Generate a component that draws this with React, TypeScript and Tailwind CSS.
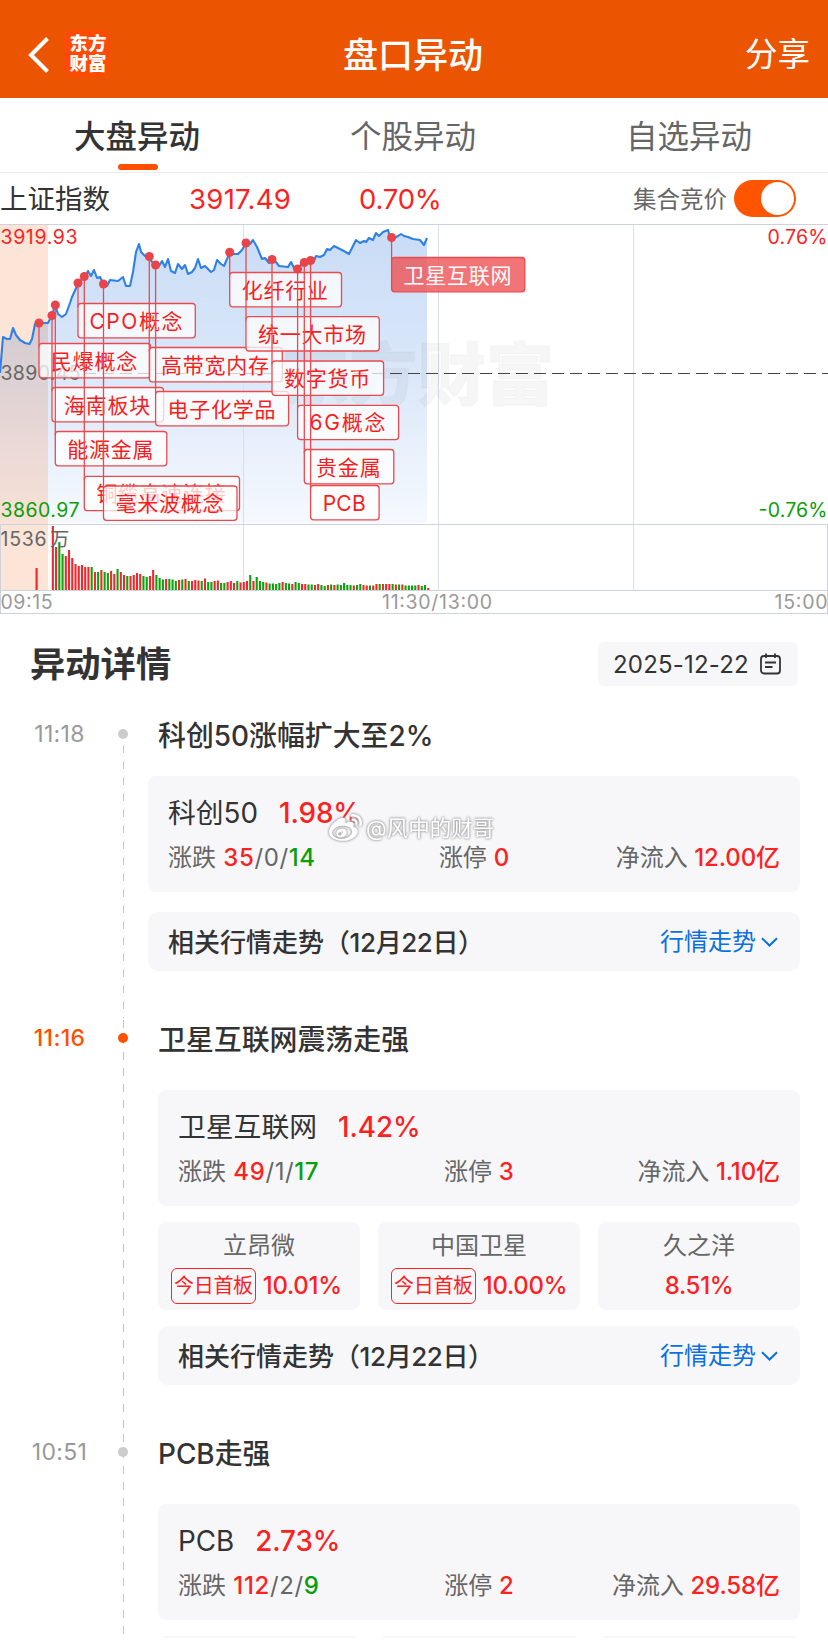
import { FaWeibo } from "react-icons/fa";

type Stock = { name: string; pct: string; board?: boolean };
type Event = {
  time: string;
  title: string;
  active?: boolean;
  name: string;
  pct: string;
  up: string;
  flat: string;
  down: string;
  limit: string;
  inflow: string;
  stocks: Stock[];
  last?: boolean;
};

const EVENTS: Event[] = [
  {
    time: "11:18", title: "科创50涨幅扩大至2%", name: "科创50", pct: "1.98%",
    up: "35", flat: "0", down: "14", limit: "0", inflow: "12.00亿", stocks: [],
  },
  {
    time: "11:16", title: "卫星互联网震荡走强", active: true, name: "卫星互联网", pct: "1.42%",
    up: "49", flat: "1", down: "17", limit: "3", inflow: "1.10亿",
    stocks: [
      { name: "立昂微", pct: "10.01%", board: true },
      { name: "中国卫星", pct: "10.00%", board: true },
      { name: "久之洋", pct: "8.51%" },
    ],
  },
  {
    time: "10:51", title: "PCB走强", name: "PCB", pct: "2.73%",
    up: "112", flat: "2", down: "9", limit: "2", inflow: "29.58亿",
    stocks: [], last: true,
  },
];

const PRICE =
  "0,373 3,337 7,339 10,339 13,328 16,335 20,340 25,343 29.5,344 32,339 35,324 39,323 48,323 52,315 55,305 58,314 62,317 66,314 70,303 72,297 78,284 82,279 85,277 88,271 91,276 94,270 97,278 100,277 104,285 107,286 110,280 118,281 123,277 126,286 130,286 133,272 136,252 139,244 141,252 145,256 149,256 152,262 156,265 159,266 162,261 165,267 168,259 171,271 175,273 178,264 182,269 185,265 188,274 192,272 195,268 198,259 201,268 205,266 211,272 214,270 217,260 221,264 224,266 230,252 234,254 238,254 242,250 246,243 250,244 253,240 257,247 262,259 265,258 269,263 272,259 276,262 279,266 288,267 291,262 295,270 298,269 301,265 304,262 310,260 313,263 316,256 320,257 324,255 327,249 330,250 334,246 338,248 342,250 349,254 353,246 356,240 360,243 364,241 366,242 369,238 373,240 376,233 379,236 383,232 388,230 390,237 394,238 398,236 401,234 404,236 408,237 413,239 420,240 424,245 427,238";

const VOLUME =
  "r64 r43 g48 g36 r34 r40 r32 r26 r24 r25 r23 r23 g23 r18 g18 r20 g18 g17 r19 r16 g21 r18 r15 g14 r14 r15 r17 r16 g14 g13 r14 r20 g15 g12 g10.5 r11 g11 g10.5 g9 r10 g10.5 r11 g9 r9 r10 r9.5 g9 r11.5 g8 g8 r9 r9.5 g7 g7 r8 r9 r7 g9 r7.5 r8 r9 g15 r9 g13 g9 g8 r7.5 g6.5 g6.5 g6 g7 r8 g7 g6.5 r6 g8 g7 r6 r6 g5.5 g5.5 r5 r6 g5 g4 r5 g5.5 r5 g5.5 g5 g7 g5 g5 r4.5 g5 g6 r5 r4.5 g4.5 r4.5 r6 g6 r6 r6 r6 g6 r5.5 g5.5 r5.5 g4.5 g4.5 g4.5 g4.5 r5 g4 g5 r2".split(" ");

type Tag = { t: string; x: number; y: number; w: number; dy: number; hot?: boolean };

const TAGS: Tag[] = [
  { t: "民爆概念", x: 39, y: 343.5, w: 111.5, dy: 323 },
  { t: "海南板块", x: 52, y: 387.5, w: 111.5, dy: 315.5 },
  { t: "能源金属", x: 55.3, y: 431.5, w: 111.5, dy: 305 },
  { t: "CPO概念", x: 78, y: 303.5, w: 117.3, dy: 283 },
  { t: "铜缆高速连接", x: 84.3, y: 476.3, w: 155.2, dy: 276.5 },
  { t: "毫米波概念", x: 103.5, y: 486, w: 133.5, dy: 284 },
  { t: "高带宽内存", x: 149.3, y: 347.5, w: 133, dy: 256.5 },
  { t: "电子化学品", x: 155.6, y: 391.5, w: 133, dy: 265 },
  { t: "化纤行业", x: 229.7, y: 272.5, w: 111.8, dy: 252.3 },
  { t: "统一大市场", x: 246, y: 316.7, w: 133.3, dy: 243 },
  { t: "数字货币", x: 272, y: 361, w: 111.6, dy: 259.5 },
  { t: "6G概念", x: 297.6, y: 405.3, w: 101, dy: 269 },
  { t: "贵金属", x: 304.3, y: 449.5, w: 89.5, dy: 262.5 },
  { t: "PCB", x: 310.6, y: 485.5, w: 68.5, dy: 260.5 },
  { t: "卫星互联网", x: 391.6, y: 257.5, w: 133.2, dy: 237.5, hot: true },
];

const TEXT_W: Record<string, number> = { CPO概念: 93, "6G概念": 76, PCB: 43 };

function Axis({ x, y, w, fill, end, children }: { x: number; y: number; w: number; fill: string; end?: boolean; children: string }) {
  return (
    <text x={x} y={y} fontSize="19.5" fill={fill} textLength={w} textAnchor={end ? "end" : "start"}>
      {children}
    </text>
  );
}

function Chart() {
  return (
    <svg className="block h-[390px] w-full" viewBox="0 224 828 390">
      <defs>
        <linearGradient id="area" x1="0" y1="230" x2="0" y2="523" gradientUnits="userSpaceOnUse">
          <stop offset="0" stopColor="#c9dcf6" />
          <stop offset="0.5" stopColor="#dbe8f9" />
          <stop offset="1" stopColor="#f5f9fe" />
        </linearGradient>
        <linearGradient id="early" x1="0" y1="320" x2="0" y2="523" gradientUnits="userSpaceOnUse">
          <stop offset="0" stopColor="#d2cbd2" />
          <stop offset="1" stopColor="#f9e1d7" />
        </linearGradient>
      </defs>
      <rect x="0" y="225" width="48" height="365" fill="#fce4d7" />
      <polygon points={`0,523 ${PRICE} 427,523`} fill="url(#area)" />
      <polygon points="0,523 0,373 3,337 7,339 10,339 13,328 16,335 20,340 25,343 29.5,344 32,339 35,324 39,323 48,323 48,523" fill="url(#early)" />
      <path d="M243.5 225V590M438.5 225V590M633.5 225V590" stroke="#d9dee8" />
      <text x="281" y="400" fontSize="68" fontWeight="900" fill="#000" fillOpacity="0.035" stroke="#000" strokeOpacity="0.015" strokeWidth="2" textLength="273">东方财富</text>
      <path d="M84 373.5H828" stroke="#444" strokeWidth="1.2" strokeDasharray="12 6" />
      <path d="M0 224.5H828M0 524.5H828M0 590.5H828M0 613.5H828M.5 524V614M827.5 524V614" stroke="#cdd2dc" />
      <polyline points={PRICE} fill="none" stroke="#2f80e4" strokeWidth="2.1" strokeLinejoin="round" />
      <rect x="35.5" y="568" width="2.2" height="22" fill="#f0282c" />
      {VOLUME.map((v, i) => {
        const h = Number(v.slice(1));
        return <rect key={i} x={51.8 + i * 3.236} y={590 - h} width="2.1" height={h} fill={v[0] === "r" ? "#f0282c" : "#0aa30a"} />;
      })}
      <Axis x={0.5} y={244.3} w={77} fill="#fc2222">3919.93</Axis>
      <Axis x={827.5} y={244.3} w={60} fill="#fc2222" end>0.76%</Axis>
      <Axis x={0.5} y={379.8} w={80} fill="#666">3890.45</Axis>
      <Axis x={0.5} y={517} w={79} fill="#0a9e0a">3860.97</Axis>
      <Axis x={827.5} y={517} w={69} fill="#0a9e0a" end>-0.76%</Axis>
      <Axis x={0.5} y={546.3} w={46} fill="#666">1536</Axis>
      <Axis x={50} y={546.3} w={19} fill="#666">万</Axis>
      <Axis x={0.5} y={609} w={52} fill="#999">09:15</Axis>
      <Axis x={382} y={609} w={110} fill="#999">11:30/13:00</Axis>
      <Axis x={827.5} y={609} w={53} fill="#999" end>15:00</Axis>
      {TAGS.map((g) => (
        <g key={g.t}>
          <path d={`M${g.x} ${g.dy}V${g.y + 4}`} stroke="#ea4a4e" strokeWidth="1.3" />
          <rect x={g.x} y={g.y} width={g.w} height="34.3" rx="3" fill={g.hot ? "#ee5558" : "#fff"} fillOpacity={g.hot ? 0.82 : 0.75} stroke="#ea4a4e" strokeWidth="1.3" />
          <text x={g.x + g.w / 2 - 0.7} y={g.y + 25} fontSize="21" textAnchor="middle" fill={g.hot ? "#fff" : "#f91d20"} textLength={TEXT_W[g.t] ?? g.t.length * 21.6}>
            {g.t}
          </text>
          <circle cx={g.x} cy={g.dy} r="4.5" fill="#e9444a" />
        </g>
      ))}
    </svg>
  );
}

function Related({ first }: { first: boolean }) {
  return (
    <div className={`${first ? "mt-5" : "mt-4"} flex h-[59px] items-center justify-between rounded-[10px] bg-[#f7f7fa] pr-[22px] pl-5`}>
      <span className="pt-0.5 text-[26px] font-medium text-[#333]">
        相关行情走势<span className="tracking-[-0.4px]">（12月22日）</span>
      </span>
      <span className="flex items-center gap-[5px] text-[24px] text-[#0b70e0]">
        行情走势
        <svg className="h-[10px] w-[17px]" viewBox="0 0 17 10" fill="none" stroke="currentColor" strokeWidth="2">
          <path d="M1 1.2 8.5 8.5 16 1.2" />
        </svg>
      </span>
    </div>
  );
}

function Section({ e, i }: { e: Event; i: number }) {
  const first = i === 0;
  return (
    <section className={`grid grid-cols-[118px_11px_1fr] pr-7 ${first ? "h-[307px]" : "h-[414px]"}`}>
      <div className={`pl-px text-center text-[23px] leading-7 tracking-[0.3px] ${first ? "pt-[7px]" : "pt-1"} ${e.active ? "font-medium text-[#ff5000]" : "text-[#999]"}`}>
        {e.time}
      </div>
      <div className={`relative flex justify-center ${first ? "pt-8 pb-0.5" : ""}`}>
        <div className="w-px bg-[repeating-linear-gradient(to_bottom,#c4c4c4_0px,#c4c4c4_8px,transparent_8px,transparent_16px)]" />
        <i className={`absolute left-0 size-[10px] rounded-full ${first ? "top-4" : "top-[13px]"} ${e.active ? "bg-[#ff5000]" : "bg-[#ccc]"}`} />
      </div>
      <div className={first ? "pl-[19px]" : "pl-[29px]"}>
        <h3 className={`text-[27.9px] leading-10 font-medium text-[#333] ${first ? "mb-[20px] pt-[3px] pl-2.5" : "mb-[30px]"}`}>{e.title}</h3>
        <div className="h-[116px] rounded-lg bg-[#f7f7fa] px-5 pt-4">
          <div className="flex gap-[21px] pt-px text-[27.8px] leading-10 text-[#333]">
            <span>{e.name}</span>
            <span className="font-medium tracking-[-0.1px] text-[#fc2222]">{e.pct}</span>
          </div>
          <div className="grid grid-cols-[1fr_auto_1fr] pt-[5px] text-[24px] leading-10 text-[#666]">
            <span className="tracking-[0.6px]">
              <span className="tracking-normal">涨跌</span> <b className="font-medium text-[#fc2222]">{e.up}</b>/{e.flat}/<b className="font-medium text-[#0a9e0a]">{e.down}</b>
            </span>
            <span>涨停 <b className="font-medium text-[#fc2222]">{e.limit}</b></span>
            <span className="text-right tracking-[-0.1px]">净流入 <b className="font-medium text-[#fc2222]">{e.inflow}</b></span>
          </div>
        </div>
        {e.stocks.length > 0 && (
          <div className="mt-4 grid grid-cols-3 gap-[18px]">
            {e.stocks.map((s) => (
              <div key={s.name} className="flex h-[88px] flex-col rounded-lg bg-[#f7f7fa] pt-1.5 text-center text-[24px] text-[#666]">
                <span className="leading-9">{s.name}</span>
                <span className={`flex items-center gap-[7px] pt-0.5 leading-10 font-medium tracking-[-0.3px] text-[#fc2222] ${s.board ? "pl-[13px]" : "justify-center"}`}>
                  {s.board && (
                    <em className="h-9 rounded-md border border-[#fc2222] px-0.5 text-[20px] leading-[34px] font-normal tracking-[-0.3px] not-italic">今日首板</em>
                  )}
                  {s.pct}
                </span>
              </div>
            ))}
          </div>
        )}
        {e.last ? (
          <div className="mt-4 grid grid-cols-3 gap-[18px]">
            <div className="h-[88px] rounded-lg bg-[#f7f7fa]" />
            <div className="h-[88px] rounded-lg bg-[#f7f7fa]" />
            <div className="h-[88px] rounded-lg bg-[#f7f7fa]" />
          </div>
        ) : (
          <Related first={first} />
        )}
      </div>
    </section>
  );
}

export default function App() {
  return (
    <div className="relative h-[1652px] w-[828px] overflow-hidden bg-white font-['Inter','Noto_Sans_CJK_SC',sans-serif] whitespace-nowrap text-[#333]">
      <header className="grid h-[98px] grid-cols-3 items-center bg-[#eb5502] px-[18px] pt-3 text-white">
        <div className="flex items-center gap-[15px] pl-2.5">
          <svg className="h-[36px] w-[21px]" viewBox="0 0 21 36" fill="none" stroke="#fff" strokeWidth="4">
            <path d="M19.5 1.5 3 18 19.5 34.5" />
          </svg>
          <div className="-mt-1 flex h-[47px] w-[46px] flex-col items-center justify-center rounded-[9px] bg-[#ff4a03] pl-0.5 text-[18.5px] leading-5 font-black">
            <span>东方</span>
            <span>财富</span>
          </div>
        </div>
        <h1 className="pr-0.5 text-center text-[35px] font-medium">盘口异动</h1>
        <span className="text-right text-[32.5px]">分享</span>
      </header>

      <nav className="grid h-[75px] grid-cols-3 border-b border-[#ececec] text-center text-[31.5px] leading-[78px] text-[#666]">
        <div className="flex flex-col items-center">
          <span className="h-[66px] pr-0.5 font-medium text-[#333]">大盘异动</span>
          <i className="h-1.5 w-10 rounded-full bg-[#ff5000]" />
        </div>
        <span className="pr-0.5">个股异动</span>
        <span className="pr-0.5">自选异动</span>
      </nav>

      <div className="flex h-[51px] items-center text-[27.5px] text-[#fc2222]">
        <span className="w-[189px] pt-0.5 text-[#333]">上证指数</span>
        <span className="w-[170px] pt-0.5 tracking-[0.3px]">3917.49</span>
        <span className="pt-0.5 tracking-[-0.2px]">0.70%</span>
        <span className="ml-auto pt-0.5 text-[23.5px] text-[#666]">集合竞价</span>
        <span className="mr-8 ml-[7px] flex h-[37px] w-[62px] justify-end rounded-full bg-[#ff5500] p-0.5">
          <i className="size-[33px] rounded-full bg-white" />
        </span>
      </div>

      <Chart />

      <div className="flex h-[99px] items-center justify-between pr-[30px] pl-[30px]">
        <h2 className="pt-[3px] text-[35.3px] font-bold">异动详情</h2>
        <span className="flex h-11 w-[200px] items-center justify-between rounded-md bg-[#f7f7fa] pr-[17px] pl-[15px] text-[24px]">
          <span className="pt-0.5 tracking-[0.2px]">2025-12-22</span>
          <svg className="h-[22px] w-[21px]" viewBox="0 0 21 22" fill="none" stroke="#333" strokeWidth="1.8">
            <rect x="1" y="3" width="19" height="17.5" rx="3" />
            <path d="M6 .5V5M15 .5V5M5 9.5H16M5 14H12.5" />
          </svg>
        </span>
      </div>

      <main className="h-[925px] overflow-hidden">
        {EVENTS.map((e, i) => (
          <Section key={e.time} e={e} i={i} />
        ))}
      </main>

      <div className="absolute top-[812px] left-[329px] flex items-center gap-[4px] text-[21.5px] text-white [filter:drop-shadow(0_0_1px_#999)_drop-shadow(0_0_1px_#bbb)]">
        <FaWeibo className="size-[33px]" />
        <span>@风中的财哥</span>
      </div>
    </div>
  );
}
